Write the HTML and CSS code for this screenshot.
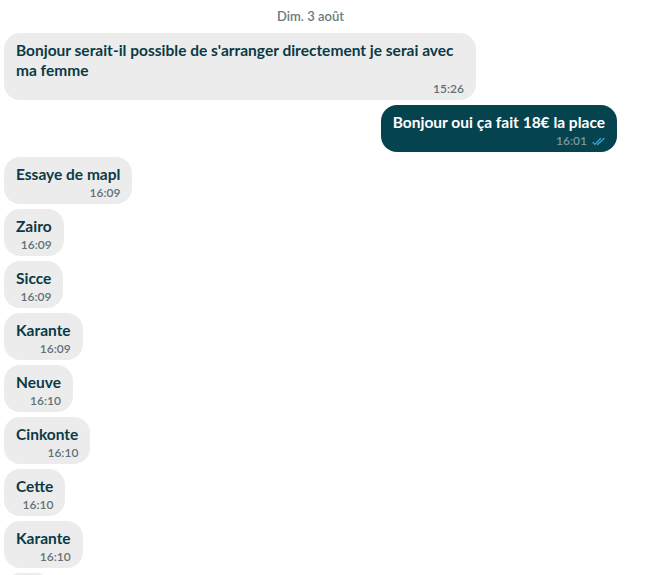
FILE: index.html
```
<!DOCTYPE html>
<html lang="fr">
<head>
  <meta charset="UTF-8" />
  <meta name="viewport" content="width=device-width, initial-scale=1.0"/>
  <title>Conversation</title>
  <link rel="stylesheet" href="styles.css">
</head>
<body>
  <div class="thread">
    <div class="day">Dim. 3 août</div>

    <div class="msg in">
      <div class="msg-text">Bonjour serait-il possible de s'arranger directement je serai avec ma femme</div>
      <div class="msg-meta">15:26</div>
    </div>

    <div class="msg out">
      <div class="msg-text">Bonjour oui ça fait 18€ la place</div>
      <div class="msg-meta">16:01
        <svg class="read" width="13" height="9" viewBox="0 0 13 9" fill="none" stroke="currentColor" stroke-width="1.2" stroke-linecap="round">
          <path d="M1 5.5 L3 7.5 L8.5 1.5"/>
          <path d="M5.5 7.5 L12 1.5"/>
        </svg>
      </div>
    </div>

    <div class="msg in"><div class="msg-text">Essaye de mapl</div><div class="msg-meta">16:09</div></div>
    <div class="msg in"><div class="msg-text">Zairo</div><div class="msg-meta">16:09</div></div>
    <div class="msg in"><div class="msg-text">Sicce</div><div class="msg-meta">16:09</div></div>
    <div class="msg in"><div class="msg-text">Karante</div><div class="msg-meta">16:09</div></div>
    <div class="msg in"><div class="msg-text">Neuve</div><div class="msg-meta">16:10</div></div>
    <div class="msg in"><div class="msg-text">Cinkonte</div><div class="msg-meta">16:10</div></div>
    <div class="msg in"><div class="msg-text">Cette</div><div class="msg-meta">16:10</div></div>
    <div class="msg in"><div class="msg-text">Karante</div><div class="msg-meta">16:10</div></div>
    <div class="msg in tail"></div>
  </div>
</body>
</html>
```

FILE: styles.css
```
* { margin: 0; padding: 0; box-sizing: border-box; }
body {
  font-family: Lato, "Liberation Sans", sans-serif;
  background: #fff;
  color: #0a3a46;
  overflow: hidden;
}
.thread {
  width: 613px;
  margin-left: 4px;
  display: flex;
  flex-direction: column;
  gap: 5px;
}
.day {
  text-align: center;
  font-size: 13px;
  font-weight: 600;
  color: #6a7a7f;
  line-height: 14px;
  padding: 9px 0 5px;
}
.msg {
  max-width: 472px;
  padding: 7px 12px 4px;
  border-radius: 16px;
  display: flex;
  flex-direction: column;
}
.msg.in { align-self: flex-start; background: #ececec; }
.msg.out { align-self: flex-end; background: #05444f; color: #fff; }
.msg.tail { width: 48px; height: 47px; }
.msg-text {
  font-size: 15.5px;
  font-weight: 700;
  line-height: 20px;
}
.msg-meta {
  align-self: flex-end;
  margin-top: 2px;
  font-size: 12px;
  font-weight: 600;
  line-height: 14px;
  color: #5f7278;
  display: flex;
  align-items: center;
  gap: 5px;
}
.msg.out .msg-meta { color: #7b959b; }
.read { color: #3aa6dd; }
```
